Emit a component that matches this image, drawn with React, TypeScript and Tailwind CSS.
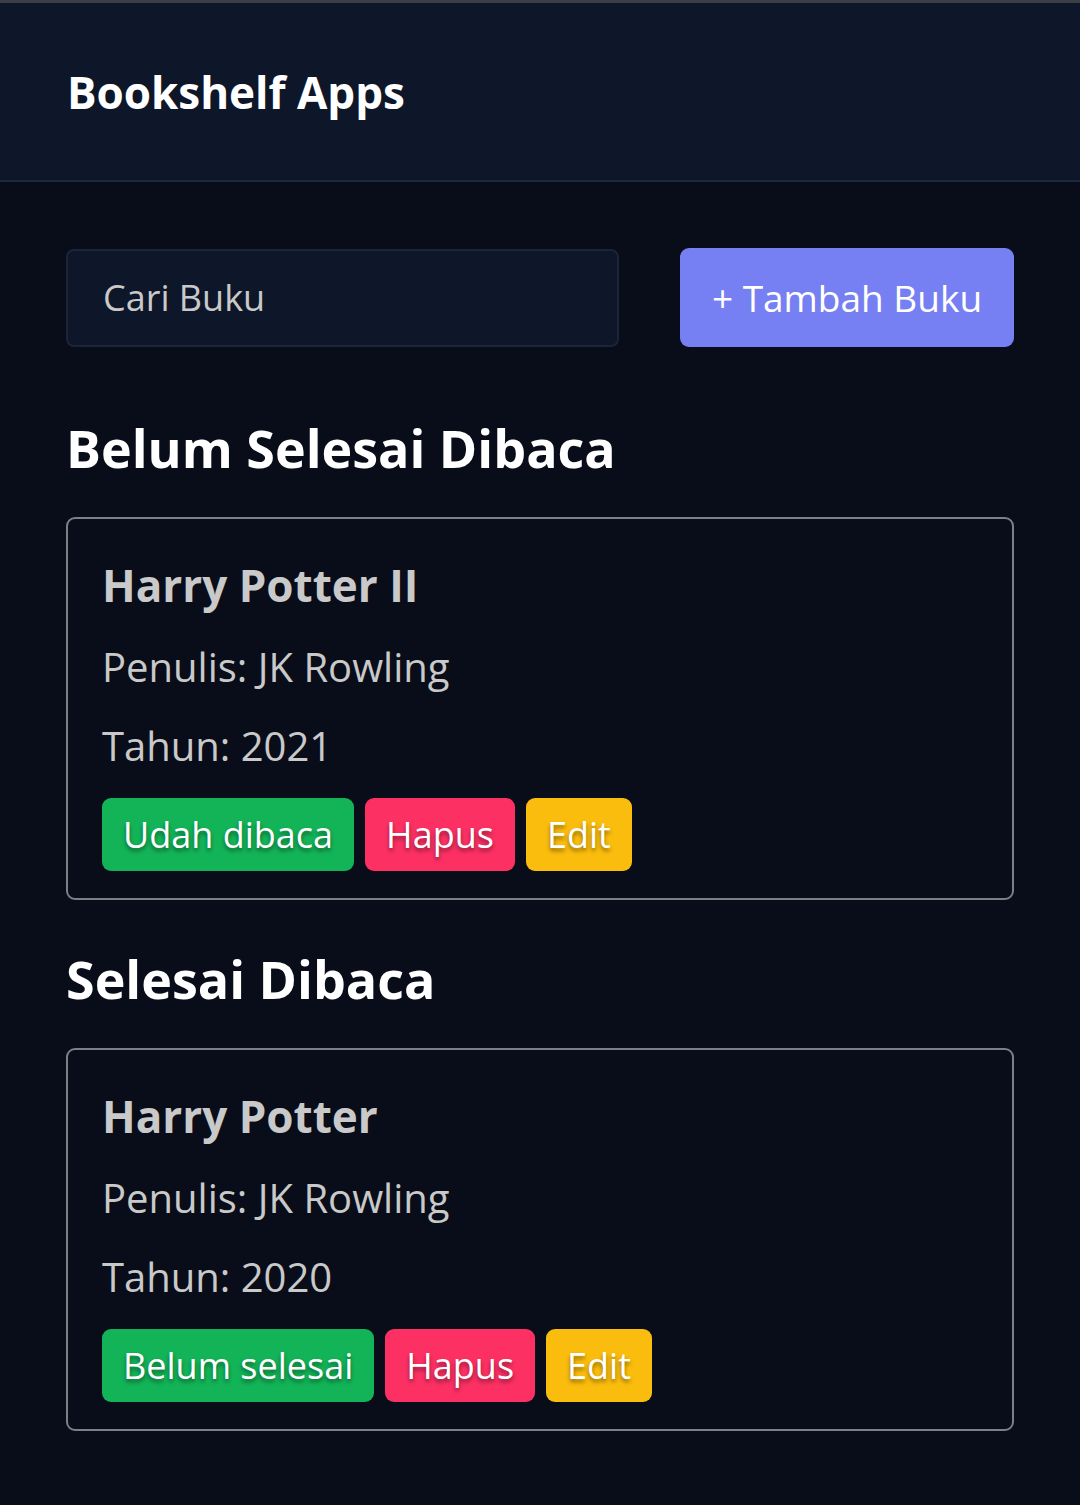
import React from "react";

type Book = {
  id: number;
  title: string;
  author: string;
  year: number;
  isComplete: boolean;
};

const books: Book[] = [
  { id: 1, title: "Harry Potter II", author: "JK Rowling", year: 2021, isComplete: false },
  { id: 2, title: "Harry Potter", author: "JK Rowling", year: 2020, isComplete: true },
];

const btn =
  "h-[73px] rounded-[9px] px-[21px] text-[36px] text-white [text-shadow:0_3px_4px_rgba(0,0,0,0.45)] leading-none";

const BookCard = ({ book }: { book: Book }) => (
  <article className="rounded-[9px] border-2 border-[#7c7f86] px-[34px] pt-[37px] pb-[27px]">
    <h3 className="text-[44px] font-bold leading-[58px] text-[#c9c9c9]">{book.title}</h3>
    <p className="mt-[27px] text-[40px] leading-[52px] text-[#c9c9c9]">Penulis: {book.author}</p>
    <p className="mt-[27px] text-[40px] leading-[52px] text-[#c9c9c9]">Tahun: {book.year}</p>
    <div className="mt-[26px] flex gap-[11px]">
      <button className={`${btn} bg-[#13b458]`}>
        {book.isComplete ? "Belum selesai" : "Udah dibaca"}
      </button>
      <button className={`${btn} bg-[#fd3064]`}>Hapus</button>
      <button className={`${btn} bg-[#fbbd0d]`}>Edit</button>
    </div>
  </article>
);

export default function App() {
  const unread = books.filter((b) => !b.isComplete);
  const read = books.filter((b) => b.isComplete);

  return (
    <div className="min-h-[1505px] bg-[#080d19] font-['Open_Sans','Noto_Sans',sans-serif] border-t-[3px] border-[#3b3e45]">
      <header className="h-[179px] bg-[#0e1629] border-b-2 border-[#1d2740] flex items-center px-[67px]">
        <h1 className="text-[44px] font-bold text-white">Bookshelf Apps</h1>
      </header>

      <main className="px-[66px] pt-[66px]">
        <div className="flex items-center justify-between">
          <input
            placeholder="Cari Buku"
            className="h-[98px] w-[553px] rounded-[8px] border-2 border-[#1b2439] bg-[#0e1629] px-[35px] text-[36px] text-[#cfcfcf] placeholder:text-[#c9c9c9] outline-none"
          />
          <button className="h-[99px] w-[334px] rounded-[9px] bg-[#7680f2] text-[37px] text-white">
            + Tambah Buku
          </button>
        </div>

        <h2 className="mt-[64px] text-[52px] font-bold leading-[74px] text-white">Belum Selesai Dibaca</h2>
        <div className="mt-[32px] flex flex-col gap-6">
          {unread.map((b) => (
            <BookCard key={b.id} book={b} />
          ))}
        </div>

        <h2 className="mt-[42px] text-[52px] font-bold leading-[74px] text-white">Selesai Dibaca</h2>
        <div className="mt-[32px] flex flex-col gap-6">
          {read.map((b) => (
            <BookCard key={b.id} book={b} />
          ))}
        </div>
      </main>
    </div>
  );
}
